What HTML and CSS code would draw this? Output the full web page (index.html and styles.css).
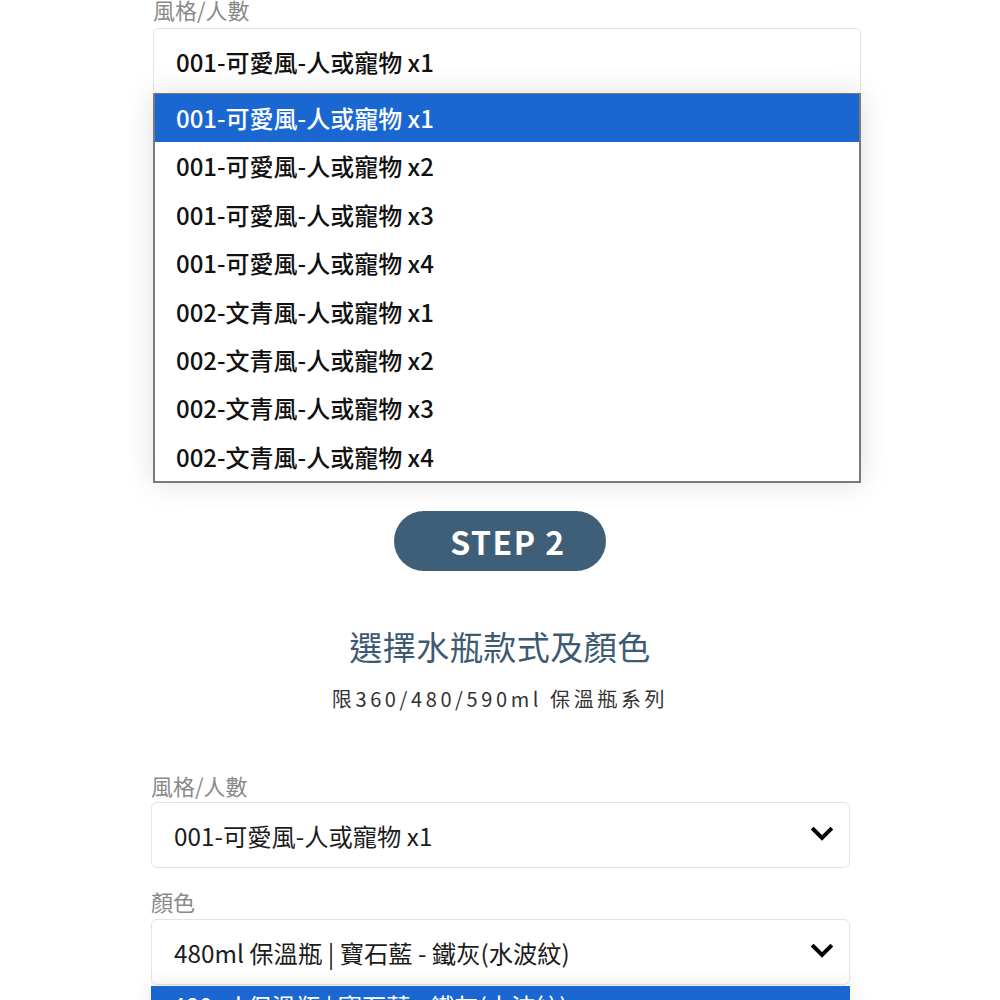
FILE: index.html
```html
<!DOCTYPE html>
<html lang="zh-Hant">
<head>
<meta charset="utf-8">
<link rel="stylesheet" href="styles.css">
</head>
<body>
<div class="page">
  <section class="step1">
    <div class="label label-top">風格/人數</div>
    <div class="field-wrap">
      <div class="select open">001-可愛風-人或寵物 x1</div>
      <ul class="dropdown">
        <li class="active">001-可愛風-人或寵物 x1</li>
        <li>001-可愛風-人或寵物 x2</li>
        <li>001-可愛風-人或寵物 x3</li>
        <li>001-可愛風-人或寵物 x4</li>
        <li>002-文青風-人或寵物 x1</li>
        <li>002-文青風-人或寵物 x2</li>
        <li>002-文青風-人或寵物 x3</li>
        <li>002-文青風-人或寵物 x4</li>
      </ul>
    </div>
  </section>

  <div class="step-wrap"><div class="step-pill">STEP 2</div></div>

  <h2 class="title">選擇水瓶款式及顏色</h2>
  <p class="subtitle">限360/480/590ml 保溫瓶系列</p>

  <section class="form">
    <div class="label">風格/人數</div>
    <div class="select closed">
      <span>001-可愛風-人或寵物 x1</span>
      <svg class="chev" viewBox="0 0 22 16" width="22" height="16"><polyline points="2.5,3.5 11,12 19.5,3.5" fill="none" stroke="#000" stroke-width="4" stroke-linecap="square"/></svg>
    </div>
    <div class="label label-2">顏色</div>
    <div class="field-wrap">
      <div class="select closed">
        <span>480ml 保溫瓶 | 寶石藍 - 鐵灰(水波紋)</span>
        <svg class="chev" viewBox="0 0 22 16" width="22" height="16"><polyline points="2.5,3.5 11,12 19.5,3.5" fill="none" stroke="#000" stroke-width="4" stroke-linecap="square"/></svg>
      </div>
      <ul class="dropdown dropdown-2">
        <li class="active">480ml 保溫瓶 | 寶石藍 - 鐵灰(水波紋)</li>
      </ul>
    </div>
  </section>
</div>
</body>
</html>
```

FILE: styles.css
```css
html, body {
  margin: 0;
  padding: 0;
  background: #fff;
  overflow: hidden;
  height: 1000px;
}
body {
  font-family: "Noto Sans CJK TC", "Noto Sans", sans-serif;
  color: #222;
}
.page {
  width: 1000px;
}
.step1 {
  padding-left: 153px;
  width: 708px;
  margin-top: -6px;
}
.label {
  font-size: 22px;
  line-height: 30px;
  color: #8a8a8a;
}
.label-top {
  height: 34px;
}
.field-wrap {
  position: relative;
}
.select {
  box-sizing: border-box;
  border: 1px solid #e3e3e3;
  border-radius: 5px;
  background: #fff;
  font-size: 24px;
  color: #1c1c1c;
  display: flex;
  align-items: center;
  justify-content: space-between;
}
.select.open {
  height: 66px;
  padding-left: 22px;
  font-weight: 500;
  color: #111;
}
.dropdown {
  position: absolute;
  left: 0;
  right: 0;
  top: 65px;
  margin: 0;
  padding: 0;
  list-style: none;
  background: #fff;
  border: 1px solid #7a7a7a;
  border-width: 1px 2px 2px 2px;
  box-shadow: 0 0 28px rgba(0, 0, 0, 0.13);
  z-index: 5;
}
.dropdown li {
  height: 48.4px;
  line-height: 48px;
  padding-left: 21px;
  font-size: 24px;
  font-weight: 500;
  color: #111;
}
.dropdown li.active {
  background: #1a67d2;
  color: #fff;
}
.step-wrap {
  display: flex;
  justify-content: center;
  margin-top: 417px;
}
.step-pill {
  width: 212px;
  height: 60px;
  box-sizing: border-box;
  border-radius: 30px;
  background: #3f5f78;
  color: #fff;
  font-size: 32px;
  font-weight: 700;
  letter-spacing: 1.5px;
  display: flex;
  align-items: center;
  justify-content: center;
  padding-left: 16px;
}
.title {
  margin: 50px 0 0;
  text-align: center;
  font-size: 33px;
  font-weight: 400;
  line-height: 50px;
  color: #3c5a72;
  letter-spacing: 0.5px;
}
.subtitle {
  margin: 13px 0 0;
  text-align: center;
  font-size: 20px;
  line-height: 30px;
  color: #333;
  letter-spacing: 3.6px;
}
.form {
  padding-left: 151px;
  width: 699px;
  margin-top: 56px;
}
.form .label {
  height: 32px;
}
.form .label-2 {
  margin-top: 18px;
  height: 33px;
}
.select.closed {
  height: 66px;
  padding: 0 16px 0 22px;
  border-radius: 6px;
  font-size: 24.3px;
}
.chev {
  display: block;
  margin-top: -2px;
}
.dropdown-2 {
  top: 67px;
  border: none;
  box-shadow: 0 0 20px rgba(0, 0, 0, 0.1);
}
.dropdown-2 li {
  font-weight: 400;
  font-size: 24.3px;
  line-height: 40px;
  height: 48px;
}
```
